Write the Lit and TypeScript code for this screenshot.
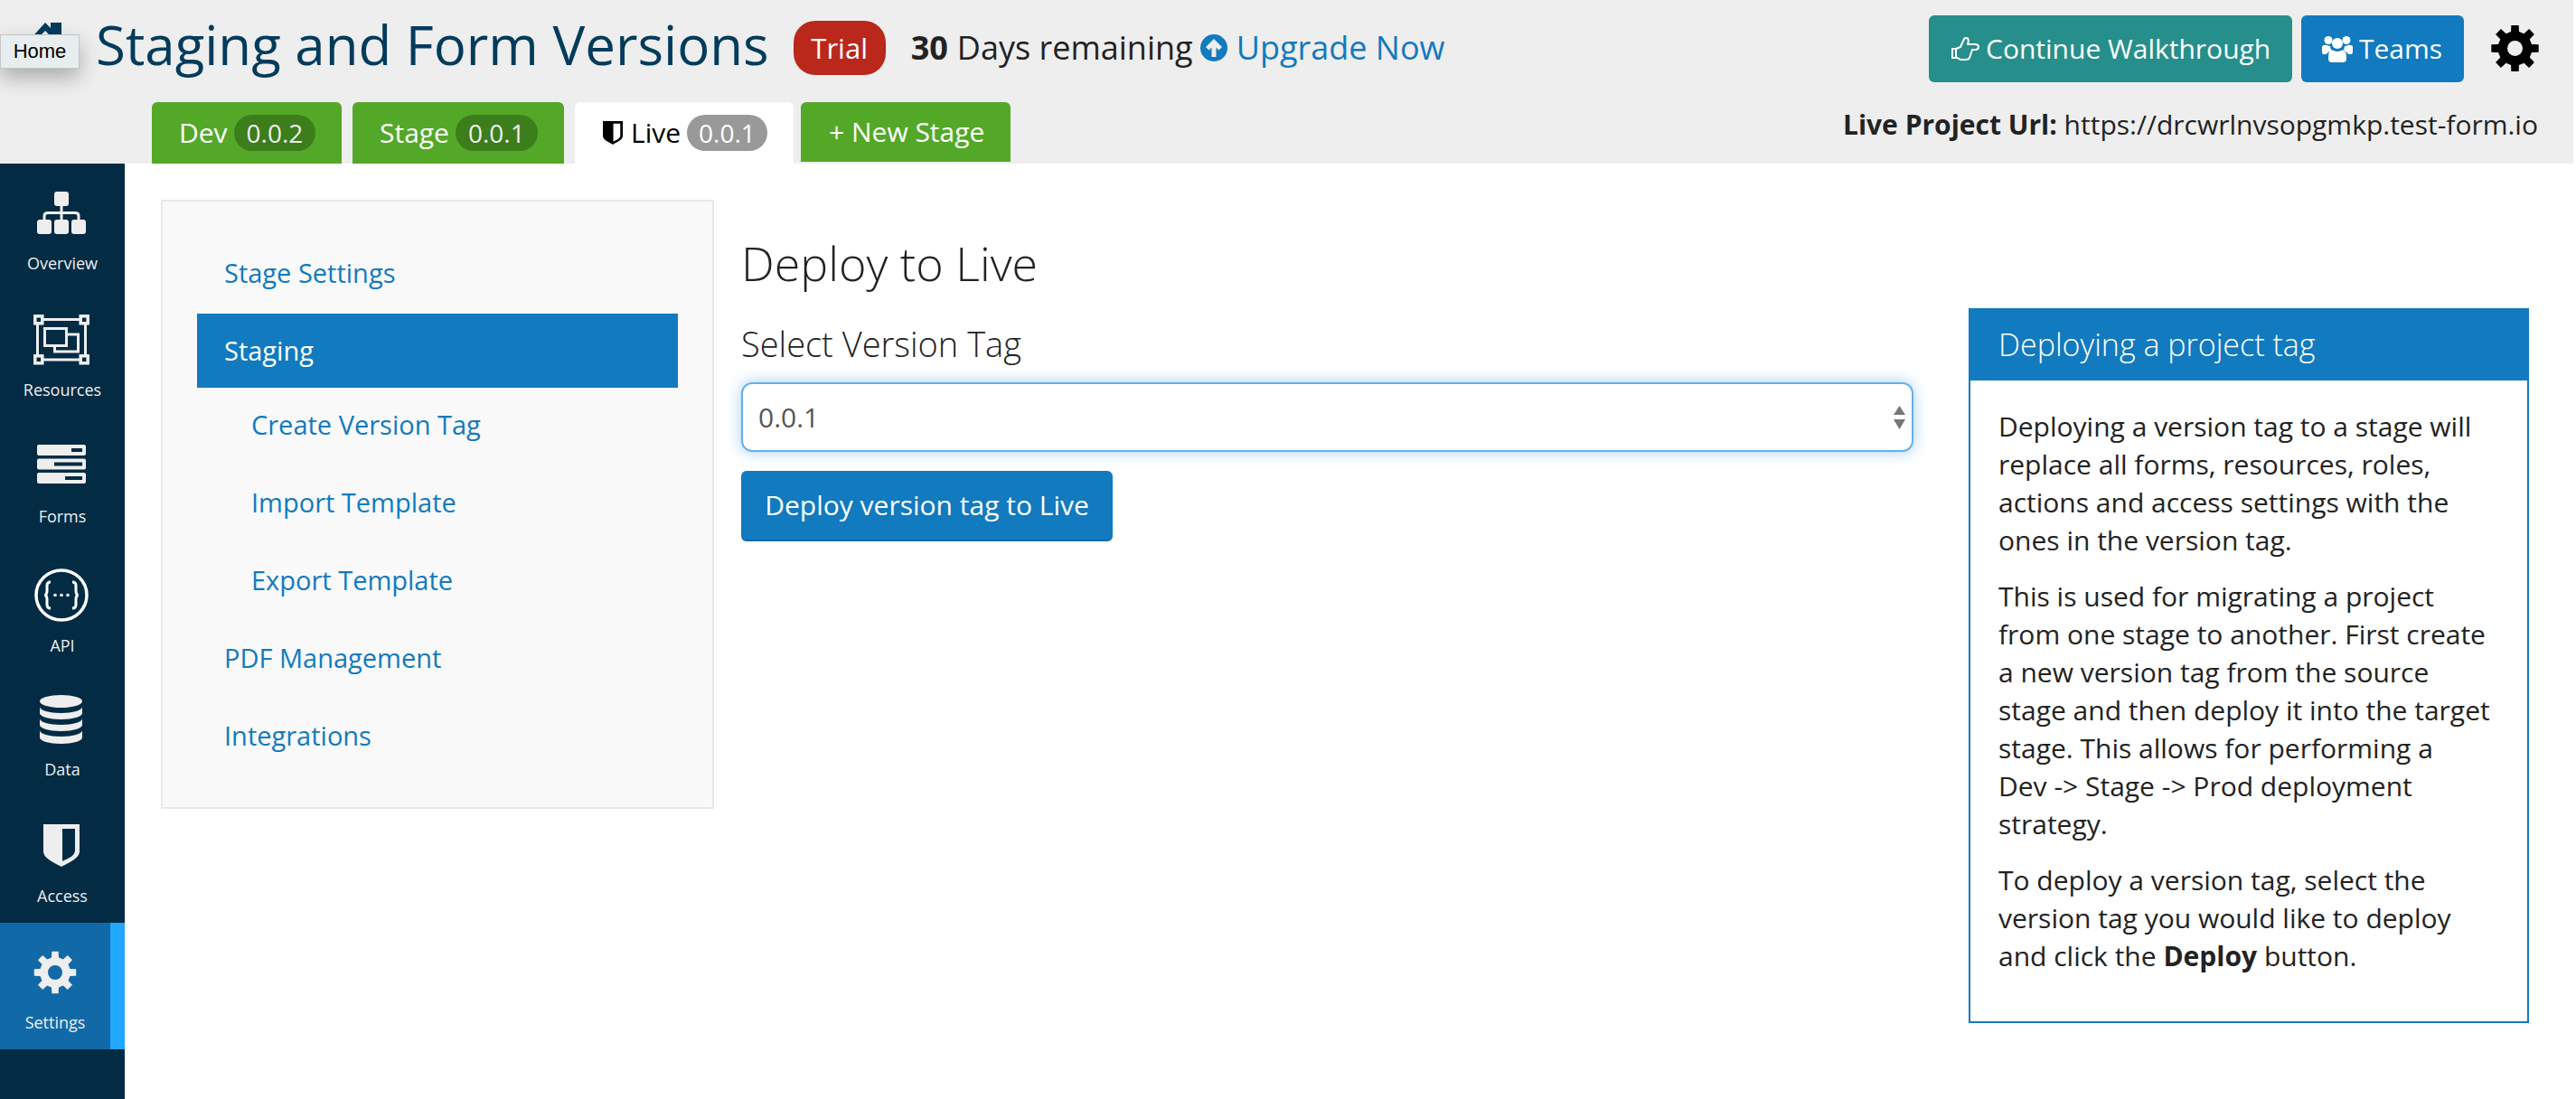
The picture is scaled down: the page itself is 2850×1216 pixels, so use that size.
import { LitElement, html, css, svg } from "lit";
import { customElement } from "lit/decorators.js";

function gear(cx: number, cy: number, ro: number, ri: number, rh: number, n: number): string {
  const pts: string[] = [];
  const step = (Math.PI * 2) / n;
  for (let i = 0; i < n; i++) {
    const a = i * step - Math.PI / 2;
    const w = step * 0.2;
    const w2 = step * 0.3;
    const p = (r: number, t: number) => `${(cx + r * Math.cos(t)).toFixed(2)} ${(cy + r * Math.sin(t)).toFixed(2)}`;
    pts.push(p(ri, a - w2), p(ro, a - w), p(ro, a + w), p(ri, a + w2));
  }
  const hole = `M${cx - rh} ${cy}a${rh} ${rh} 0 1 0 ${2 * rh} 0a${rh} ${rh} 0 1 0 ${-2 * rh} 0z`;
  return `M${pts.join("L")}Z${hole}`;
}

const shieldPath = "M14 6H54V36C54 44 41 49 34 53C27 49 14 44 14 36ZM35 11V47C41 44 49 41 49 35V11Z";

const icons: Record<string, unknown> = {
  overview: svg`<g fill="#eee"><rect x="26" y="6" width="16" height="16" rx="3"/><rect x="7" y="37" width="16" height="16" rx="3"/><rect x="26" y="37" width="16" height="16" rx="3"/><rect x="45" y="37" width="16" height="16" rx="3"/></g><path d="M34 20V40M15 40V33Q15 29.500 19 29.500H49Q53 29.500 53 33V40" fill="none" stroke="#eee" stroke-width="3"/>`,
  resources: svg`<g fill="none" stroke="#eee" stroke-width="3"><path d="M8 7.500H60M8 52H60M7.500 8V52M60.500 8V52"/><rect x="15.500" y="17.500" width="24" height="19"/><path d="M39 24H52.500V43H26.500V37"/></g><g fill="#032b43" stroke="#eee" stroke-width="3.500"><rect x="4.800" y="3.800" width="8" height="8"/><rect x="55.200" y="3.800" width="8" height="8"/><rect x="4.800" y="47.800" width="8" height="8"/><rect x="55.200" y="47.800" width="8" height="8"/></g>`,
  forms: svg`<g fill="#eee"><rect x="7" y="6" width="54" height="12" rx="2"/><rect x="7" y="21.500" width="54" height="12" rx="2"/><rect x="7" y="37" width="54" height="12" rx="2"/></g><g fill="#032b43"><rect x="45" y="10" width="12" height="4"/><rect x="26" y="25.500" width="31" height="4"/><rect x="38" y="41" width="19" height="4"/></g>`,
  api: svg`<ellipse cx="34" cy="32.500" rx="28" ry="27.500" fill="none" stroke="#fff" stroke-width="3.500"/><path d="M22 18Q18 18 18 22V28Q18 32 15.500 32.500Q18 33 18 37V43Q18 47 22 47M46 18Q50 18 50 22V28Q50 32 52.500 32.500Q50 33 50 37V43Q50 47 46 47" fill="none" stroke="#fff" stroke-width="3"/><g fill="#fff"><circle cx="27" cy="32.500" r="1.800"/><circle cx="34" cy="32.500" r="1.800"/><circle cx="41" cy="32.500" r="1.800"/></g>`,
  data: svg`<g fill="#eee"><ellipse cx="33.500" cy="10" rx="23.500" ry="7"/><path d="M10 16c0 4 10.500 7 23.500 7s23.500-3 23.500-7v7c0 4-10.500 7-23.500 7s-23.500-3-23.500-7z"/><path d="M10 29c0 4 10.500 7 23.500 7s23.500-3 23.500-7v7c0 4-10.500 7-23.500 7s-23.500-3-23.500-7z"/><path d="M10 42c0 4 10.500 7 23.500 7s23.500-3 23.500-7v8c0 4-10.500 7-23.500 7s-23.500-3-23.500-7z"/></g>`,
  access: svg`<path fill="#eee" fill-rule="evenodd" d="${shieldPath}"/>`,
  settings: svg`<path fill="#eee" fill-rule="evenodd" d="${gear(35, 30, 23.5, 17, 8, 8)}"/>`,
};

const navItems = [
  ["overview", "Overview"],
  ["resources", "Resources"],
  ["forms", "Forms"],
  ["api", "API"],
  ["data", "Data"],
  ["access", "Access"],
  ["settings", "Settings"],
];

@customElement("app-root")
export class AppRoot extends LitElement {
  static styles = css`
    :host {
      display: flex;
      flex-direction: column;
      height: 1216px;
      overflow: hidden;
      background: #fff;
      font-family: "Open Sans", "Liberation Sans", sans-serif;
      font-size: 30px;
      line-height: 42px;
      color: #222;
    }
    a { color: #127abe; text-decoration: none; }
    header {
      height: 181px;
      margin-right: 3px;
      background: #eee;
      display: flex;
      flex-direction: column;
    }
    .top { height: 113px; display: flex; align-items: flex-start; }
    .home { position: relative; margin: 25px 0 0 32px; width: 36px; height: 30px; flex: none; }
    .home svg { display: block; }
    .tooltip {
      position: absolute;
      left: -32px;
      top: 13px;
      width: 88px;
      height: 38px;
      box-sizing: border-box;
      background: #e8edf0;
      border: 1px solid #c4c6c8;
      box-shadow: 0 10px 22px rgba(0, 0, 0, 0.28);
      font-family: "Liberation Sans", sans-serif;
      font-size: 22px;
      line-height: 36px;
      text-align: center;
      color: #000;
    }
    h1 {
      margin: 16px 0 0 38px;
      font-size: 60px;
      line-height: 66px;
      font-weight: 400;
      color: #033b5c;
      white-space: nowrap;
    }
    .trial {
      margin: 23px 0 0 27px;
      width: 102px;
      height: 60px;
      border-radius: 24px;
      background: #b9281a;
      color: #fff;
      font-size: 31px;
      font-weight: 500;
      line-height: 60px;
      text-align: center;
    }
    .days {
      margin: 27px 0 0 28px;
      font-size: 36px;
      line-height: 52px;
      white-space: nowrap;
      display: flex;
      align-items: center;
    }
    .days b { font-weight: 700; margin-right: 10px; }
    .days svg { margin: 0 10px 0 8px; display: block; }
    .actions { margin: 17px 0 0 auto; display: flex; }
    .btn {
      height: 74px;
      display: flex;
      align-items: center;
      border-radius: 6px;
      color: #fff;
      font-size: 30px;
      font-weight: 500;
      white-space: nowrap;
    }
    .walk { background: #268f8b; width: 402px; padding-left: 25px; box-sizing: border-box; gap: 7px; }
    .teams { background: #127abe; width: 180px; margin-left: 10px; padding-left: 23px; box-sizing: border-box; gap: 7px; }
    .cog { margin: 11px 38px 0 30px; display: block; }
    .bottom { height: 68px; display: flex; align-items: flex-start; padding-left: 168px; }
    .tab {
      height: 68px;
      box-sizing: border-box;
      border-radius: 6px 6px 0 0;
      background: #54a828;
      color: #fff;
      font-size: 30px;
      font-weight: 500;
      display: flex;
      align-items: center;
      white-space: nowrap;
      margin-right: 12px;
    }
    .tab.dev { width: 210px; padding-left: 30px; }
    .tab.stage { width: 234px; padding-left: 30px; }
    .tab.live { width: 242px; padding-left: 31px; background: #fff; color: #000; font-weight: 400; margin-right: 8px; }
    .tab.new { width: 232px; height: 66px; padding-left: 31px; }
    .tab svg { display: block; margin-right: 9px; }
    .pill {
      margin-left: 7px;
      height: 40px;
      border-radius: 20px;
      background: #3c7d1c;
      color: #eee;
      font-size: 28px;
      font-weight: 400;
      line-height: 40px;
      padding: 0 14px;
    }
    .live .pill { background: #999; color: #fff; padding: 0 13px; }
    .url { margin: 4px 39px 0 auto; font-size: 30px; white-space: nowrap; color: #222; }
    .url b { font-weight: 700; }
    .body { flex: 1; display: flex; min-height: 0; }
    nav { width: 138px; flex: none; background: #032b43; }
    .item {
      height: 140px;
      box-sizing: border-box;
      padding-top: 25px;
      display: flex;
      flex-direction: column;
      align-items: center;
      color: #eee;
      font-size: 18px;
      line-height: 24px;
    }
    .item svg { display: block; overflow: visible; margin-bottom: 13px; }
    .item.api svg { margin-bottom: 16px; }
    .item.settings { background: #116aa7; border-right: 16px solid #22a7ff; }
    main { flex: 1; display: flex; align-items: flex-start; padding: 40px 0 0 40px; }
    .side {
      width: 612px;
      height: 674px;
      flex: none;
      box-sizing: border-box;
      padding: 38px;
      background: #f9f9f9;
      border: 2px solid #e8e8e8;
      font-size: 29px;
    }
    .side a { display: block; height: 82px; line-height: 82px; padding-left: 30px; margin-bottom: 4px; }
    .side a.on { background: #127abe; color: #fff; margin-bottom: 0; }
    .side a.sub { padding-left: 60px; }
    .center { width: 1297px; flex: none; margin-left: 30px; }
    h2 { margin: 41px 0 0 0; font-size: 52px; line-height: 57px; font-weight: 300; color: #222; }
    label { display: block; margin-top: 36px; font-size: 38px; line-height: 51px; font-weight: 300; color: #222; }
    .select {
      margin-top: 17px;
      height: 77px;
      box-sizing: border-box;
      border: 2px solid #66afe9;
      border-radius: 12px;
      box-shadow: 0 0 16px rgba(102, 175, 233, 0.6);
      padding-left: 17px;
      display: flex;
      align-items: center;
      justify-content: space-between;
      color: #555;
    }
    .select svg { margin-right: 7px; display: block; }
    .deploy {
      margin-top: 21px;
      width: 411px;
      height: 78px;
      box-sizing: border-box;
      background: #127abe;
      border-bottom: 2px solid #0f6ba7;
      border-radius: 6px;
      color: #fff;
      font-size: 30px;
      font-weight: 500;
      display: flex;
      align-items: center;
      justify-content: center;
    }
    .help {
      margin: 120px 0 0 61px;
      width: 620px;
      height: 791px;
      flex: none;
      box-sizing: border-box;
      border: 2px solid #127abe;
    }
    .help h3 {
      margin: 0;
      height: 78px;
      padding-left: 31px;
      background: #127abe;
      color: #fff;
      font-size: 34px;
      line-height: 76px;
      font-weight: 300;
    }
    .help div { padding: 30px 31px; }
    .help p { margin: 0 0 20px; }
    .help b { font-weight: 700; }
  `;

  render() {
    return html`
      <header>
        <div class="top">
          <div class="home">
            <svg width="36" height="30" viewBox="0 0 36 30">
              <path fill="#033b5c" d="M0 20L18 0 24 6V0H36V30H0Z"/>
              <path fill="#eee" d="M7 20L18 9 29 20 29 24 18 13 7 24Z"/>
            </svg>
            <div class="tooltip">Home</div>
          </div>
          <h1>Staging and Form Versions</h1>
          <div class="trial">Trial</div>
          <div class="days">
            <b>30</b>Days remaining
            <svg width="30" height="30" viewBox="0 0 30 30"><circle cx="15" cy="15" r="15" fill="#127abe"/><path fill="#eee" d="M15 5L24 14 20.500 17.500 17.500 14.500V25H12.500V14.500L9.500 17.500 6 14Z"/></svg>
            <a>Upgrade Now</a>
          </div>
          <div class="actions">
            <div class="btn walk">
              <svg width="31" height="26" viewBox="0 0 31 26"><path fill="none" stroke="#fff" stroke-width="2" stroke-linejoin="round" d="M1 13H5V23H1ZM5 13L10 11 14 2Q15.500 0.500 18 1.500 19.500 3 18 8H27Q30 8.500 30 11 30 13.500 27 14H23L20 23Q19 25 16 25H10L5 22"/></svg>
              Continue Walkthrough
            </div>
            <div class="btn teams">
              <svg width="34" height="30" viewBox="0 0 34 30"><g fill="#fff"><circle cx="7" cy="5.500" r="4.500"/><circle cx="27" cy="5.500" r="4.500"/><circle cx="17" cy="9" r="6"/><path d="M0 12Q3 10 5 11 8 12 9 12 9 15 11 17 6 18 5 21H1Q0 20 0 18ZM34 12Q31 10 29 11 26 12 25 12 25 15 23 17 28 18 29 21H33Q34 20 34 18ZM9 17Q11 16 13 17 17 19 21 17 23 16 25 17 27 18 27 26 27 30 23 30H11Q7 30 7 26 7 18 9 17Z"/></g></svg>
              Teams
            </div>
            <svg class="cog" width="53" height="51" viewBox="0 0 53 51"><path fill="#000" fill-rule="evenodd" d="${gear(26.5, 25.5, 26.5, 19, 8.5, 8)}"/></svg>
          </div>
        </div>
        <div class="bottom">
          <div class="tab dev">Dev<span class="pill">0.0.2</span></div>
          <div class="tab stage">Stage<span class="pill">0.0.1</span></div>
          <div class="tab live">
            <svg width="22" height="26" viewBox="14 6 40 47"><path fill="#000" fill-rule="evenodd" d="${shieldPath}"/></svg>
            Live<span class="pill">0.0.1</span>
          </div>
          <div class="tab new">+ New Stage</div>
          <div class="url"><b>Live Project Url:</b> https://drcwrlnvsopgmkp.test-form.io</div>
        </div>
      </header>
      <div class="body">
        <nav>
          ${navItems.map(
            ([k, label]) => html`
              <div class="item ${k}">
                <svg width="70" height="60" viewBox="0 0 70 60">${icons[k]}</svg>
                ${label}
              </div>
            `
          )}
        </nav>
        <main>
          <div class="side">
            <a>Stage Settings</a>
            <a class="on">Staging</a>
            <a class="sub">Create Version Tag</a>
            <a class="sub">Import Template</a>
            <a class="sub">Export Template</a>
            <a>PDF Management</a>
            <a>Integrations</a>
          </div>
          <div class="center">
            <h2>Deploy to Live</h2>
            <label>Select Version Tag</label>
            <div class="select">
              0.0.1
              <svg width="13" height="26" viewBox="0 0 13 26"><path fill="#777" d="M6.500 0L13 10H0ZM0 15H13L6.500 26Z"/></svg>
            </div>
            <div class="deploy">Deploy version tag to Live</div>
          </div>
          <section class="help">
            <h3>Deploying a project tag</h3>
            <div>
              <p>Deploying a version tag to a stage will replace all forms, resources, roles, actions and access settings with the ones in the version tag.</p>
              <p>This is used for migrating a project from one stage to another. First create a new version tag from the source stage and then deploy it into the target stage. This allows for performing a Dev&nbsp;-&gt; Stage -&gt; Prod deployment strategy.</p>
              <p>To deploy a version tag, select the version tag you would like to deploy and click the <b>Deploy</b> button.</p>
            </div>
          </section>
        </main>
      </div>
    `;
  }
}
